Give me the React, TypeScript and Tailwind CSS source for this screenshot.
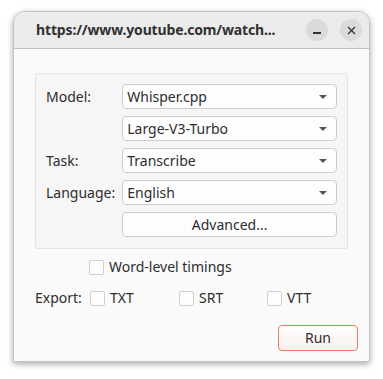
const Combo = ({ value }: { value: string }) => (
  <div className="flex h-[25px] items-center justify-between rounded-[4px] border border-[#cdcdcd] bg-[#fdfdfd] pl-[4px] pr-[9px]">
    <span>{value}</span>
    <svg width="8" height="4" viewBox="0 0 8 4">
      <path d="M0 0h8L4 4z" fill="#555" />
    </svg>
  </div>
)

const Check = ({ label }: { label: string }) => (
  <label className="flex h-[20px] items-center gap-[5px]">
    <span className="size-[15px] rounded-[2px] border border-[#cfcfcf] bg-[#fdfdfd]" />
    <span>{label}</span>
  </label>
)

export default function App() {
  return (
    <div className="h-[379px] w-[383px] bg-white pl-[13px] pt-[11px] font-['Noto_Sans',sans-serif] text-[14px] leading-[20px] text-[#2d2d2d]">
      <div className="flex h-[351px] w-[357px] flex-col overflow-hidden rounded-t-[12px] border border-[#c4c4c4] bg-[#fafafa] shadow-[0_2px_6px_rgba(0,0,0,0.35)]">
        <div className="flex h-[37px] shrink-0 items-center border-b border-[#c2c2c2] bg-[#ebebeb] pl-[22px] pr-[7px]">
          <span className="flex-1 text-[14px] font-bold tracking-[-0.15px] text-[#303030]">
            https://www.youtube.com/watch...
          </span>
          <div className="flex gap-[12px]">
            <div className="flex size-[22px] items-center justify-center rounded-full bg-[#dadada]">
              <span className="mt-[6px] h-[1.5px] w-[8px] bg-[#333]" />
            </div>
            <div className="flex size-[22px] items-center justify-center rounded-full bg-[#dadada]">
              <svg width="9" height="9" viewBox="0 0 9 9">
                <path d="M1 1l7 7M8 1L1 8" stroke="#333" strokeWidth="1.3" />
              </svg>
            </div>
          </div>
        </div>

        <div className="flex flex-1 flex-col px-[21px] pt-[24px]">
          <div className="grid grid-cols-[auto_1fr] items-center gap-x-[7px] gap-y-[7px] rounded-[2px] border border-[#e4e4e4] bg-[#f6f6f6] px-[10px] pb-[11px] pt-[10px]">
            <span>Model:</span>
            <Combo value="Whisper.cpp" />
            <span />
            <Combo value="Large-V3-Turbo" />
            <span>Task:</span>
            <Combo value="Transcribe" />
            <span>Language:</span>
            <Combo value="English" />
            <span />
            <button className="flex h-[25px] items-center justify-center rounded-[4px] border border-[#cdcdcd] bg-[#fdfdfd]">
              Advanced...
            </button>
          </div>

          <div className="mt-[8px] pl-[54px]">
            <Check label="Word-level timings" />
          </div>

          <div className="mt-[11px] flex items-center">
            <span className="w-[55px]">Export:</span>
            <div className="w-[89px]">
              <Check label="TXT" />
            </div>
            <div className="w-[88px]">
              <Check label="SRT" />
            </div>
            <Check label="VTT" />
          </div>

          <div className="mt-[17px] flex justify-end">
            <button className="-mr-[10px] flex h-[26px] w-[80px] items-center justify-center rounded-[4px] border border-[#ec7b5c] bg-gradient-to-b from-[#fdfdfd] to-[#fbf1ee]">
              Run
            </button>
          </div>
        </div>
      </div>
    </div>
  )
}
